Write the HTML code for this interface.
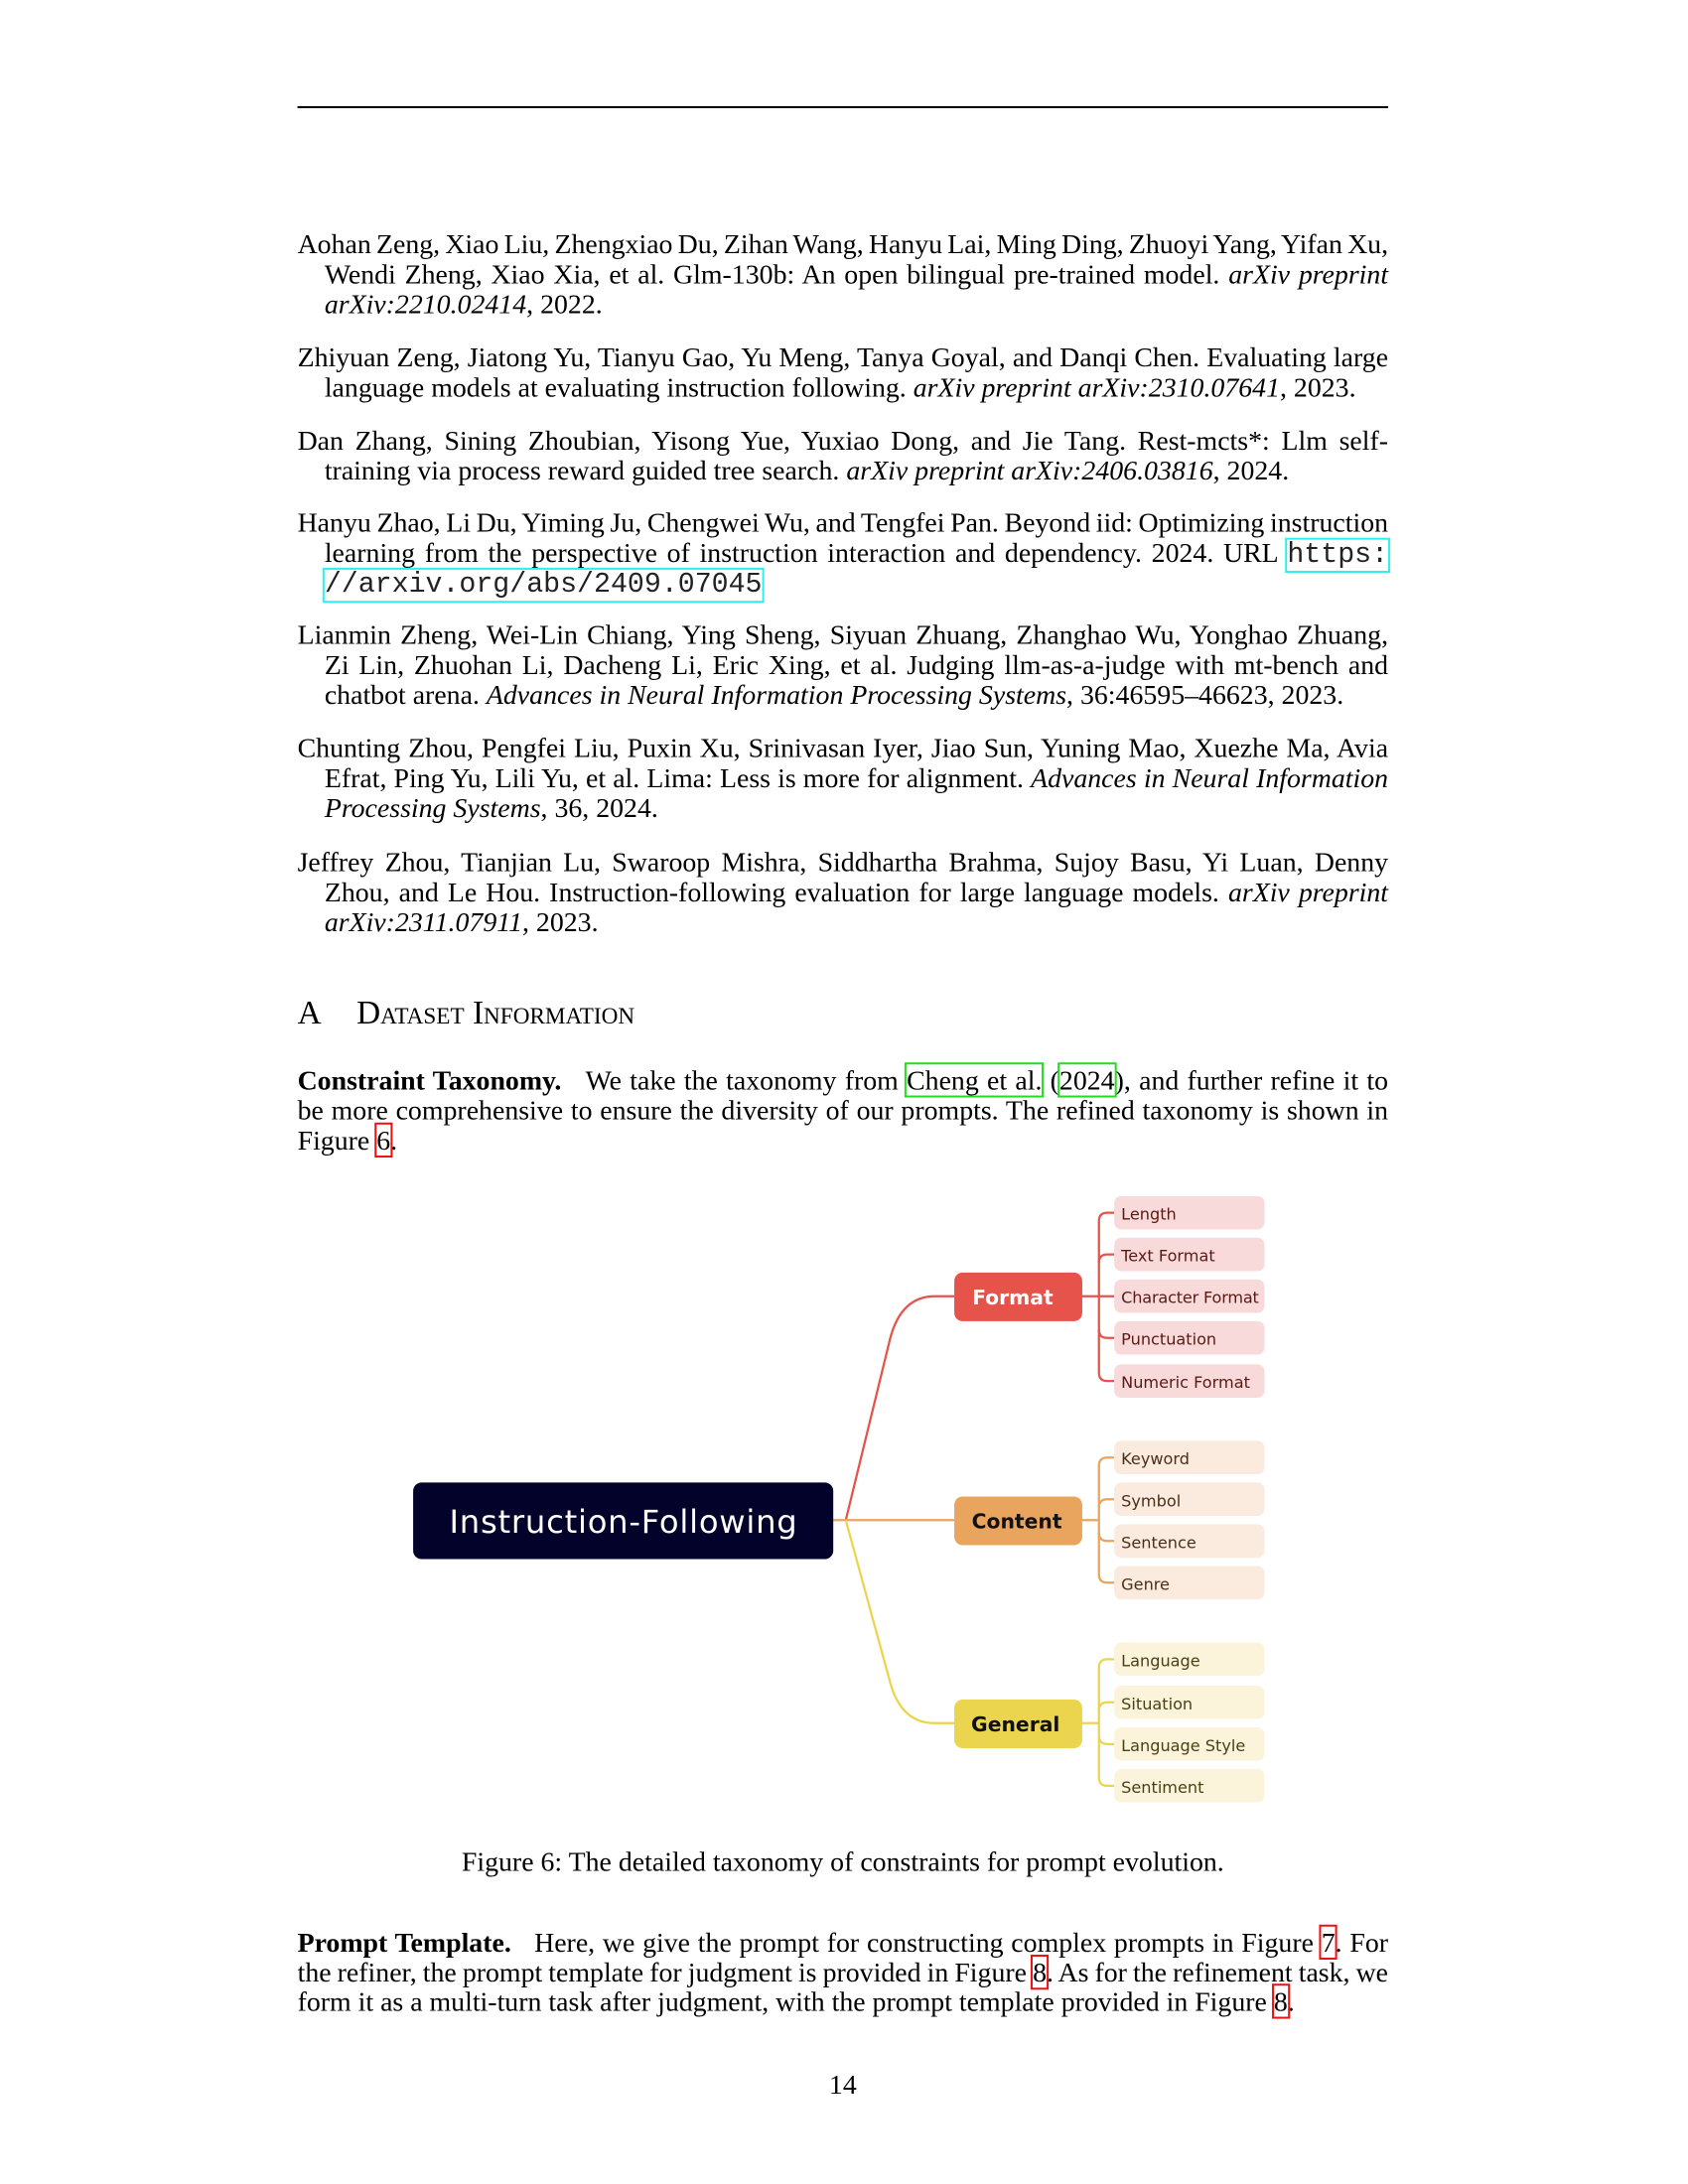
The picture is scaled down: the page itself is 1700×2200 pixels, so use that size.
<!DOCTYPE html>
<html><head><meta charset="utf-8"><style>
body{margin:0;background:#fff;}
#o{position:relative;width:1700px;height:2200px;overflow:hidden;}
#p{position:absolute;left:0;top:0;width:1700px;height:2200px;transform:scale(1.0087);transform-origin:0 0;font-family:"Liberation Serif",serif;font-size:27.6px;color:#000;}
.l{position:absolute;left:297px;width:1089px;height:30px;line-height:30px;white-space:nowrap;text-align:justify;text-align-last:justify;word-spacing:-2px;}
.i{left:324px;width:1062px;}
.e{text-align-last:left;word-spacing:0;}
.c{text-align:center;text-align-last:center;word-spacing:0;}
.m{font-family:"Liberation Mono",monospace;font-size:28px;word-spacing:0;color:#222;}
.cy{outline:2px solid #2ff0f0;}
.gr{outline:2px solid #22dd22;}
.rd{outline:2px solid #ee1111;}
svg{position:absolute;left:0;top:0;}
</style></head><body><div id="o"><div id="p">
<div style="position:absolute;left:297px;top:106px;width:1089px;height:1.5px;background:#000"></div>

<div class="l" style="top:229px">Aohan Zeng, Xiao Liu, Zhengxiao Du, Zihan Wang, Hanyu Lai, Ming Ding, Zhuoyi Yang, Yifan Xu,</div>
<div class="l i" style="top:259px">Wendi Zheng, Xiao Xia, et al. Glm-130b: An open bilingual pre-trained model. <i>arXiv preprint</i></div>
<div class="l i e" style="top:289px"><i>arXiv:2210.02414</i>, 2022.</div>

<div class="l" style="top:342px">Zhiyuan Zeng, Jiatong Yu, Tianyu Gao, Yu Meng, Tanya Goyal, and Danqi Chen. Evaluating large</div>
<div class="l i e" style="top:372px">language models at evaluating instruction following. <i>arXiv preprint arXiv:2310.07641</i>, 2023.</div>

<div class="l" style="top:425px">Dan Zhang, Sining Zhoubian, Yisong Yue, Yuxiao Dong, and Jie Tang. Rest-mcts*: Llm self-</div>
<div class="l i e" style="top:455px">training via process reward guided tree search. <i>arXiv preprint arXiv:2406.03816</i>, 2024.</div>

<div class="l" style="top:507px">Hanyu Zhao, Li Du, Yiming Ju, Chengwei Wu, and Tengfei Pan. Beyond iid: Optimizing instruction</div>
<div class="l i" style="top:537px">learning from the perspective of instruction interaction and dependency. 2024. URL <span class="m cy">https:</span></div>
<div class="l i e" style="top:567px"><span class="m cy">//arxiv.org/abs/2409.07045</span></div>

<div class="l" style="top:619px">Lianmin Zheng, Wei-Lin Chiang, Ying Sheng, Siyuan Zhuang, Zhanghao Wu, Yonghao Zhuang,</div>
<div class="l i" style="top:649px">Zi Lin, Zhuohan Li, Dacheng Li, Eric Xing, et al. Judging llm-as-a-judge with mt-bench and</div>
<div class="l i e" style="top:679px">chatbot arena. <i>Advances in Neural Information Processing Systems</i>, 36:46595–46623, 2023.</div>

<div class="l" style="top:732px">Chunting Zhou, Pengfei Liu, Puxin Xu, Srinivasan Iyer, Jiao Sun, Yuning Mao, Xuezhe Ma, Avia</div>
<div class="l i" style="top:762px">Efrat, Ping Yu, Lili Yu, et al. Lima: Less is more for alignment. <i>Advances in Neural Information</i></div>
<div class="l i e" style="top:792px"><i>Processing Systems</i>, 36, 2024.</div>

<div class="l" style="top:846px">Jeffrey Zhou, Tianjian Lu, Swaroop Mishra, Siddhartha Brahma, Sujoy Basu, Yi Luan, Denny</div>
<div class="l i" style="top:876px">Zhou, and Le Hou. Instruction-following evaluation for large language models. <i>arXiv preprint</i></div>
<div class="l i e" style="top:906px"><i>arXiv:2311.07911</i>, 2023.</div>

<div style="position:absolute;left:297px;top:994px;font-size:33px;line-height:36px;">A</div>
<div style="position:absolute;left:356px;top:994px;font-size:33px;line-height:36px;font-variant:small-caps;">Dataset Information</div>

<div class="l" style="top:1064px"><b>Constraint Taxonomy.</b>&nbsp;&nbsp; We take the taxonomy from <span class="gr">Cheng et al.</span> (<span class="gr">2024</span>), and further refine it to</div>
<div class="l" style="top:1094px">be more comprehensive to ensure the diversity of our prompts. The refined taxonomy is shown in</div>
<div class="l e" style="top:1124px">Figure <span class="rd">6</span>.</div>

<svg width="1700" height="2200" viewBox="0 0 1224 1584">
<g fill="none" stroke-width="1.6">
<path d="M608 1093 L640 962 Q648 932 672 932 L686 932" stroke="#e5534b"/>
<path d="M599 1093 L686 1093" stroke="#e9a45e"/>
<path d="M608 1093 L640 1210 Q648 1239 672 1239 L686 1239" stroke="#ebd44e"/>
<g stroke="#e5534b"><path d="M778 932 L801 932"/><path d="M801 872 L796 872 Q790 872 790 878 L790 987 Q790 993 796 993 L801 993"/><path d="M790 908 Q790 902 796 902 L801 902"/><path d="M790 956 Q790 962 796 962 L801 962"/></g>
<g stroke="#e9a45e"><path d="M778 1093 L790 1093"/><path d="M801 1048 L796 1048 Q790 1048 790 1054 L790 1132 Q790 1138 796 1138 L801 1138"/><path d="M790 1084 Q790 1078 796 1078 L801 1078"/><path d="M790 1102 Q790 1108 796 1108 L801 1108"/></g>
<g stroke="#ebd44e"><path d="M778 1239 L790 1239"/><path d="M801 1193 L796 1193 Q790 1193 790 1199 L790 1278 Q790 1284 796 1284 L801 1284"/><path d="M790 1230 Q790 1224 796 1224 L801 1224"/><path d="M790 1248 Q790 1254 796 1254 L801 1254"/></g>
</g>
<rect x="297" y="1066" width="302" height="55" rx="6" fill="#02022a"/>
<text x="448" y="1102" text-anchor="middle" fill="#fff" font-family="DejaVu Sans,sans-serif" font-size="23" textLength="250">Instruction-Following</text>
<rect x="686" y="915" width="92" height="35" rx="6" fill="#e5534b"/>
<text x="728" y="938" text-anchor="middle" fill="#fff" font-family="DejaVu Sans,sans-serif" font-size="14.5" font-weight="bold">Format</text>
<rect x="686" y="1076" width="92" height="35" rx="6" fill="#e9a45e"/>
<text x="731" y="1099" text-anchor="middle" fill="#111" font-family="DejaVu Sans,sans-serif" font-size="14.5" font-weight="bold">Content</text>
<rect x="686" y="1222" width="92" height="35" rx="6" fill="#ebd44e"/>
<text x="730" y="1245" text-anchor="middle" fill="#111" font-family="DejaVu Sans,sans-serif" font-size="14.5" font-weight="bold">General</text>
<g font-family="DejaVu Sans,sans-serif" font-size="11.5">
<g fill="#f8dada"><rect x="801" y="860" width="108" height="24" rx="5"/><rect x="801" y="890" width="108" height="24" rx="5"/><rect x="801" y="920" width="108" height="24" rx="5"/><rect x="801" y="950" width="108" height="24" rx="5"/><rect x="801" y="981" width="108" height="24" rx="5"/></g>
<g fill="#5a1a14"><text x="806" y="877">Length</text><text x="806" y="907">Text Format</text><text x="806" y="937" textLength="99">Character Format</text><text x="806" y="967">Punctuation</text><text x="806" y="998">Numeric Format</text></g>
<g fill="#fbeade"><rect x="801" y="1036" width="108" height="24" rx="5"/><rect x="801" y="1066" width="108" height="24" rx="5"/><rect x="801" y="1096" width="108" height="24" rx="5"/><rect x="801" y="1126" width="108" height="24" rx="5"/></g>
<g fill="#4a3018"><text x="806" y="1053">Keyword</text><text x="806" y="1083">Symbol</text><text x="806" y="1113">Sentence</text><text x="806" y="1143">Genre</text></g>
<g fill="#fcf4da"><rect x="801" y="1181" width="108" height="24" rx="5"/><rect x="801" y="1212" width="108" height="24" rx="5"/><rect x="801" y="1242" width="108" height="24" rx="5"/><rect x="801" y="1272" width="108" height="24" rx="5"/></g>
<g fill="#4a4018"><text x="806" y="1198">Language</text><text x="806" y="1229">Situation</text><text x="806" y="1259">Language Style</text><text x="806" y="1289">Sentiment</text></g>
</g>
</svg>

<div class="l c" style="top:1844px">Figure 6: The detailed taxonomy of constraints for prompt evolution.</div>

<div class="l" style="top:1925px"><b>Prompt Template.</b>&nbsp;&nbsp; Here, we give the prompt for constructing complex prompts in Figure <span class="rd">7</span>. For</div>
<div class="l" style="top:1955px">the refiner, the prompt template for judgment is provided in Figure <span class="rd">8</span>. As for the refinement task, we</div>
<div class="l e" style="top:1984px">form it as a multi-turn task after judgment, with the prompt template provided in Figure <span class="rd">8</span>.</div>

<div class="l c" style="top:2067px">14</div>
</div></div></body></html>
